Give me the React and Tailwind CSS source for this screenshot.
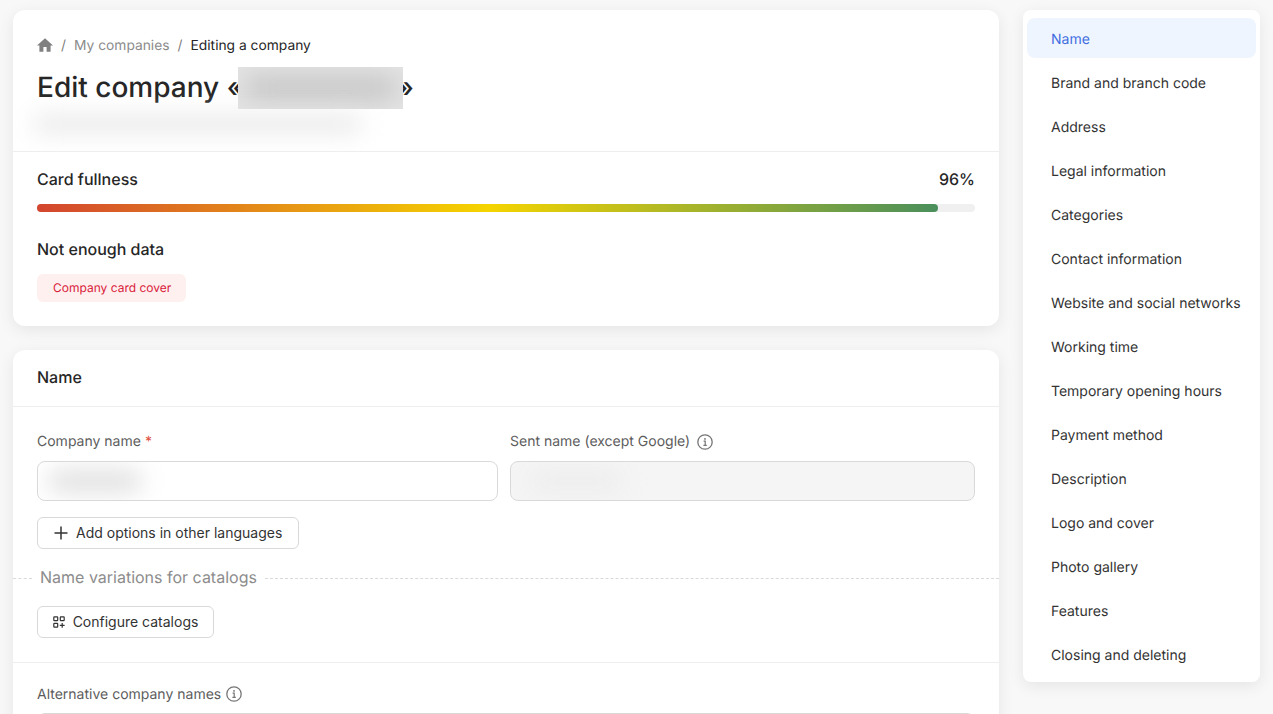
const navItems = [
  'Name',
  'Brand and branch code',
  'Address',
  'Legal information',
  'Categories',
  'Contact information',
  'Website and social networks',
  'Working time',
  'Temporary opening hours',
  'Payment method',
  'Description',
  'Logo and cover',
  'Photo gallery',
  'Features',
  'Closing and deleting',
];

function InfoIcon({ className = '' }) {
  return (
    <svg viewBox="0 0 16 16" className={`w-4 h-4 shrink-0 text-[#757575] ${className}`} fill="none" stroke="currentColor">
      <circle cx="8" cy="8" r="7.2" strokeWidth="1.3" />
      <path d="M6.6 7.2H8.2V11.2M6.4 11.3H9.8" strokeWidth="1.2" />
      <circle cx="8" cy="4.9" r="0.9" fill="currentColor" stroke="none" />
    </svg>
  );
}

function HomeIcon() {
  return (
    <svg viewBox="2 3 20 17" className="w-4 h-[14px] -mt-[3px] text-[#808080]" fill="currentColor">
      <path d="M10 20v-6h4v6h5v-8h3L12 3 2 12h3v8z" />
    </svg>
  );
}

function PlusIcon() {
  return (
    <svg viewBox="0 0 14 14" className="w-[14px] h-[14px] shrink-0 text-[#333]" fill="none" stroke="currentColor" strokeWidth="1.5">
      <path d="M7 0.5V13.5M0.5 7H13.5" />
    </svg>
  );
}

function CatalogIcon() {
  return (
    <svg viewBox="0 0 12 12" className="w-3 h-3 text-[#333]" fill="none" stroke="currentColor" strokeWidth="1.2">
      <rect x="0.8" y="0.8" width="3.9" height="3.9" rx="0.6" />
      <rect x="7.3" y="0.8" width="3.9" height="3.9" rx="0.6" />
      <rect x="0.8" y="7.3" width="3.9" height="3.9" rx="0.6" />
      <path d="M9.2 7v4.8M6.8 9.4h4.8" />
    </svg>
  );
}

export default function App() {
  return (
    <div className="h-[714px] overflow-hidden bg-[#f8f8f8] font-['Inter',sans-serif] text-[#262626] antialiased [text-rendering:geometricPrecision] flex items-start gap-6 pl-[13px] pt-[10px]">
      <div className="w-[986px] shrink-0 flex flex-col gap-6">
        {/* Header card */}
        <div className="bg-white rounded-xl shadow-[0_4px_16px_rgba(0,0,0,0.08)] h-[316px]">
          <div className="h-[142px] border-b border-[#eeeeee] px-6 pt-6 overflow-hidden">
            <div className="flex items-center h-[22px] text-[13.8px] pt-[3px]">
              <HomeIcon />
              <span className="ml-2 text-[#808080]">/</span>
              <span className="ml-2 text-[#8c8c8c]">My companies</span>
              <span className="ml-2 text-[#808080]">/</span>
              <span className="ml-2 text-[#262626]">Editing a company</span>
            </div>
            <div className="flex items-center h-[42px] mt-[11px] text-[28px] leading-9 font-medium">
              <span className="-mt-[2px]">Edit company «</span>
              <div className="relative w-[165px] h-[42px] -ml-[6px] overflow-hidden bg-[#e4e4e4] shrink-0">
                <div className="w-[150px] h-[24px] ml-2 mt-[9px] bg-[#c6c6c6] blur-md" />
              </div>
              <span className="-ml-[6px] -mt-[2px]">»</span>
            </div>
            <div className="w-[325px] h-[14px] mt-[8px] -ml-[2px] bg-[#e2e2e2] blur-md" />
          </div>
          <div className="px-6 pt-4">
            <div className="flex justify-between h-[22px] items-center font-medium">
              <span>Card fullness</span>
              <span>96%</span>
            </div>
            <div className="h-2 mt-[14px] rounded-full bg-[#f0f0f0]">
              <div className="h-2 w-[96.1%] rounded-full bg-[linear-gradient(90deg,#d3452f_0%,#f5d400_50%,#4a8f5c_100%)]" />
            </div>
            <div className="mt-[26px] h-[22px] flex items-center font-medium">Not enough data</div>
            <div className="mt-[14px] w-[149px] flex items-center h-7 pl-4 rounded-md bg-[#fff0f0] text-xs text-[#d9223a]">
              Company card cover
            </div>
          </div>
        </div>

        {/* Name card */}
        <div className="bg-white rounded-t-xl shadow-[0_4px_16px_rgba(0,0,0,0.08)] h-[400px]">
          <div className="h-[57px] border-b border-[#eeeeee] px-6 flex items-center font-medium pb-[2px]">Name</div>
          <div className="px-6 pt-6">
            <div className="flex gap-3">
              <div className="w-[461px]">
                <div className="h-[22px] mb-2 flex items-center gap-1 text-sm text-[#5c5c5c]">
                  Company name <span className="text-[#e0523f]">*</span>
                </div>
                <div className="h-10 rounded-lg border border-[#d9d9d9] bg-white overflow-hidden">
                  <div className="w-[90px] h-[18px] ml-3 mt-[10px] bg-[#d8d8d8] blur-md" />
                </div>
              </div>
              <div className="flex-1">
                <div className="h-[22px] mb-2 flex items-center gap-[7px] text-sm text-[#5c5c5c]">
                  Sent name (except Google) <InfoIcon />
                </div>
                <div className="h-10 rounded-lg border border-[#d9d9d9] bg-[#f5f5f5] overflow-hidden">
                  <div className="w-[90px] h-[18px] ml-5 mt-[10px] bg-[#ebebeb] blur-md" />
                </div>
              </div>
            </div>
            <button className="mt-4 h-8 w-[262px] rounded-md border border-[#d9d9d9] bg-white flex items-center gap-2 pl-4 text-sm text-[#333]">
              <PlusIcon />
              Add options in other languages
            </button>
          </div>
          <div className="flex items-center mt-[18px] h-[22px]">
            <div className="w-[19px] border-t border-dashed border-[#d9d9d9]" />
            <span className="px-2 text-base text-[#8c8c8c] leading-[22px] -mt-[2px]">Name variations for catalogs</span>
            <div className="flex-1 border-t border-dashed border-[#d9d9d9]" />
          </div>
          <div className="px-6 mt-[17px] pb-6 border-b border-[#eeeeee]">
            <button className="h-8 w-[177px] rounded-md border border-[#d9d9d9] bg-white flex items-center justify-center gap-2 text-sm text-[#333]">
              <CatalogIcon />
              Configure catalogs
            </button>
          </div>
          <div className="px-6 pt-[21px]">
            <div className="h-[22px] flex items-center gap-[5px] text-sm text-[#5c5c5c]">
              Alternative company names <InfoIcon className="-mt-[2px]" />
            </div>
            <div className="mt-[7px] h-10 rounded-lg border border-[#d9d9d9] bg-white" />
          </div>
        </div>
      </div>

      {/* Section nav */}
      <div className="w-[237px] shrink-0 bg-white rounded-lg shadow-[0_4px_16px_rgba(0,0,0,0.08)] px-1 py-2 flex flex-col gap-1">
        {navItems.map((item, i) => (
          <div
            key={item}
            className={`h-10 rounded-lg pl-6 pt-[3px] flex items-center text-sm ${i === 0 ? 'bg-[#eff5ff] text-[#3f6ee0]' : 'text-[#333]'}`}
          >
            {item}
          </div>
        ))}
      </div>
    </div>
  );
}
